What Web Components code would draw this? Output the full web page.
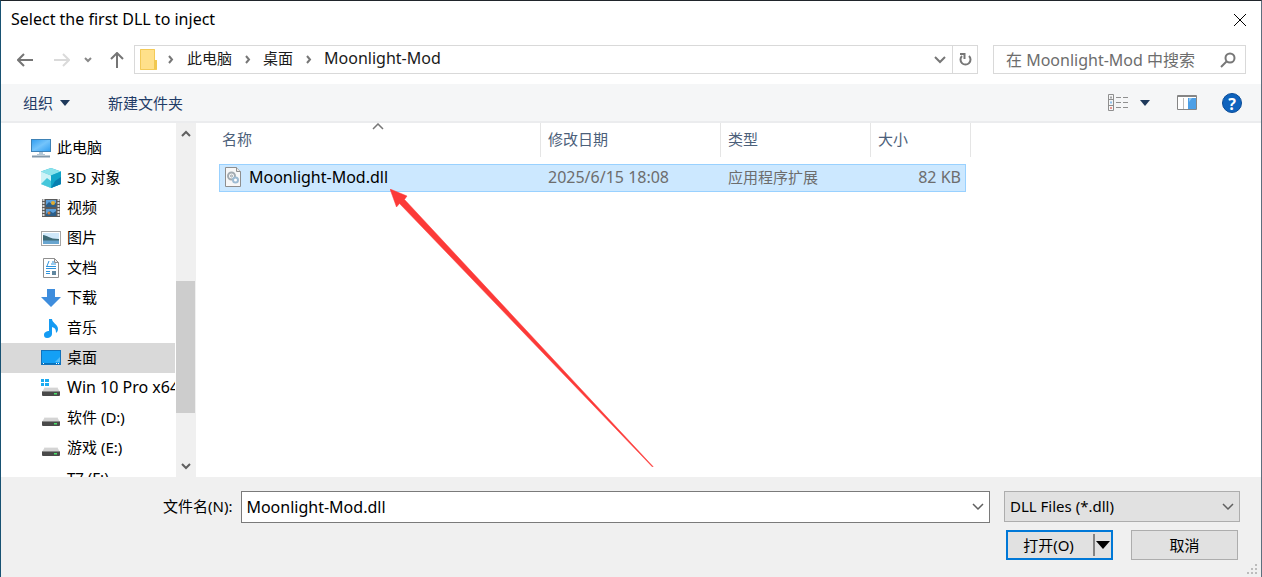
<!DOCTYPE html>
<html lang="zh-CN">
<head>
<meta charset="utf-8">
<title>Select the first DLL to inject</title>
<style>
  html, body { margin: 0; height: 100%; }
  body {
    --latin: 16px;
    --accent: #0078d7;
    --ink: #1a1a1a;
    font: 15px/20px "Noto Sans", "Noto Sans CJK SC", sans-serif;
    color: var(--ink);
    background: #fff;
  }
</style>
</head>
<body>
<file-dialog>
  <dialog-title slot="title">Select the first DLL to inject</dialog-title>
  <nav-bar slot="nav"></nav-bar>
  <command-bar slot="commands"></command-bar>
  <folder-tree slot="tree">
    <tree-item icon="pc" root>此电脑</tree-item>
    <tree-item icon="cube">3D 对象</tree-item>
    <tree-item icon="video">视频</tree-item>
    <tree-item icon="picture">图片</tree-item>
    <tree-item icon="document">文档</tree-item>
    <tree-item icon="download">下载</tree-item>
    <tree-item icon="music">音乐</tree-item>
    <tree-item icon="desktop" selected>桌面</tree-item>
    <tree-item icon="system" latin>Win 10 Pro x64</tree-item>
    <tree-item icon="drive">软件 (D:)</tree-item>
    <tree-item icon="drive">游戏 (E:)</tree-item>
    <tree-item icon="none">T7 (F:)</tree-item>
  </folder-tree>
  <file-list slot="files"></file-list>
  <dialog-footer slot="footer"></dialog-footer>
</file-dialog>

<script>
const define = (name, markup, setup) => {
  const template = document.createElement('template');
  template.innerHTML = `<style>
    *, *::before, *::after { box-sizing: border-box; }
    :host { display: block; box-sizing: border-box; }
    button, input, select { font: inherit; color: inherit; margin: 0; padding: 0; border: 0; border-radius: 0; background: none; outline: none; }
    svg { display: block; flex: none; }
  </style>` + markup;
  customElements.define(name, class extends HTMLElement {
    constructor() {
      super();
      this.attachShadow({ mode: 'open' }).append(template.content.cloneNode(true));
    }
    connectedCallback() { if (setup) setup(this, this.shadowRoot); }
  });
};

const drive = `
  <path d="M4 9h12l3 5H1z" fill="#d4d4d4"/><path d="M4 9h12l1 1H3z" fill="#efefef"/>
  <rect x="1" y="13" width="18" height="5" rx="1" fill="#4a4a4a"/>
  <path d="M1 13.500h18" stroke="#8a8a8a"/><rect x="13" y="15" width="3" height="1.500" fill="#4be36b"/>`;

const ICONS = {
  none: '',
  pc: `<defs><linearGradient id="g" x2="1" y2="1"><stop stop-color="#2f9df0"/><stop offset=".5" stop-color="#74c4fb"/><stop offset="1" stop-color="#2f9df0"/></linearGradient></defs>
    <rect x=".5" y="1.500" width="19" height="12" fill="url(#g)" stroke="#3e82b6"/>
    <path d="M8 14h4v2h2v1H6v-1h2z" fill="#b3c7d6"/><path d="M1 18.500h18" stroke="#8399aa" stroke-width="2"/>`,
  cube: `<path d="M10 0l10 3.500v12.500L10 20 0 16V3.500z" fill="#1fb1cf"/><path d="M10 0l10 3.500L10 7.500 0 3.500z" fill="#8be3ec"/>
    <path d="M0 3.500l10 4V20L0 16z" fill="#cdf3f7"/><path d="M0 16l6-6 4 3v7z" fill="#45c7db"/><path d="M10 7.500l10-4V16L10 20z" fill="#12a5c8"/><path d="M10 20l4-7 6-4v7z" fill="#087fb0"/>`,
  video: `<path d="M1 1h18v18H1z" fill="#5b5b5b"/><path d="M2.500 1v18M17.500 1v18" stroke="#d9d9d9" stroke-width="2" stroke-dasharray="2 1"/>
    <path d="M5 2h10v7H5zM5 11h10v7H5z" fill="#5c9fda"/><path d="M5 7l3-3 3 2 4-1v4H5zM5 16l4-3 3 2 3-2v5H5z" fill="#2b5e8a"/><circle cx="12" cy="5" r="2" fill="#e2ad2f"/><circle cx="8" cy="15" r="1.500" fill="#ce7b34"/>`,
  picture: `<rect x=".5" y="3.500" width="19" height="14" fill="#fff" stroke="#a6a6a6"/><path d="M2 5h16v11H2z" fill="#cfe8fa"/>
    <path d="M2 7c4 0 6 4 16 4v2H2z" fill="#3e6a76"/><path d="M2 12.500h16V16H2z" fill="#68a5cf"/>`,
  document: `<path d="M2.500.5h11l4 4v15h-15z" fill="#fff" stroke="#8f8f8f"/><path d="M13.500.5v4h4z" fill="#ececec" stroke="#8f8f8f"/>
    <path d="M8 3l-2 5M5 8.500h10M5 10.500h10M5 13.500h4M5 15.500h4M11 4h2M10 6h5" stroke="#2f93dc"/><path d="M11 13h4v4h-4z" fill="#61879f"/>`,
  download: `<path d="M6 1h8v8h6L10 19 0 9h6z" fill="#3e8ddd"/>`,
  music: `<path d="M8 1h3c0 4 6 5 6 10 0 2-1 3-2 4 0-4-1-5-4-6v7c0 2-2 4-5 4-2 0-3-1-3-3 0-3 3-4 5-4z" fill="#149bf3"/>`,
  desktop: `<rect x=".5" y="2.500" width="19" height="14" fill="#14a0f5" stroke="#1272bb"/><path d="M19 9v5h-5z" fill="#55bdf8"/><path d="M1 15.500h18" stroke="#0872b9"/><path d="M2 15.500h2m11 0h3" stroke="#fff" stroke-dasharray="1 1"/>`,
  system: drive + `<path d="M0 1h9v8H0z" fill="#fff"/><path d="M0 1h3v3H0zM4 1h4v3H4zM0 5h3v3H0zM4 5h4v3H4z" fill="#1cacf2"/>`,
  drive
};

define('file-dialog', `<style>
  :host { position: relative; display: grid; grid-template: 38px 45px 39px minmax(0, 1fr) auto / 195px minmax(0, 1fr);
    height: 100%; border: solid; border-width: 1px 1px 0 1px; border-color: #20252b #5c6f7e #20252b #185273; background: #fff; }
  slot { display: block; min-width: 0; min-height: 0; }
  slot:not([name=tree], [name=files]) { grid-column: 1 / -1; }
  slot::slotted(*) { height: 100%; }
</style>
<slot name="title"></slot><slot name="nav"></slot><slot name="commands"></slot>
<slot name="tree"></slot><slot name="files"></slot><slot name="footer"></slot>`);

define('dialog-title', `<style>
  :host { display: flex; align-items: center; justify-content: space-between; padding: 0 14px 0 10px; color: #000; }
  h1 { margin: 0; padding-bottom: 2px; font: inherit; font-size: var(--latin); }
</style>
<h1><slot></slot></h1>
<button aria-label="关闭"><svg width="14" height="14" fill="none" stroke="#000"><path d="M1 1l12 12M13 1L1 13"/></svg></button>`);

define('nav-bar', `<style>
  :host { display: flex; align-items: flex-start; padding: 6px 15px 0; }
  button { display: grid; place-items: center; height: 29px; flex: none; }
  .back { width: 18px; }
  .forward { width: 56px; }
  .recent { width: 8px; margin-left: -6px; }
  .up { width: 14px; margin-left: 18px; }
  .path, .search { display: flex; align-items: center; height: 29px; border: 1px solid #d9d9d9; }
  .path { flex: 1; min-width: 0; margin: 0 15px 0 10px; padding-left: 5px; }
  .path button { height: 27px; }
  .path .crumb { padding-bottom: 3px; }
  .latin, .search { font-size: var(--latin); }
  .sep { width: 30px; display: grid; place-items: center; padding-right: 2px; }
  .crumb + .sep { width: 31px; padding: 0; }
  .grow { flex: 1; }
  .drop { width: 24px; }
  .refresh { width: 25px; border-left: 1px solid #d9d9d9; }
  .search { width: 253px; padding: 0 9px 0 12px; }
  input { flex: 1; width: 0; height: 27px; }
  input::placeholder { color: #6d6d6d; opacity: 1; }
</style>
<button class="back" aria-label="后退"><svg width="16" height="14" fill="none" stroke="#757575" stroke-width="2"><path d="M1 7h15M7 1L1 7l6 6"/></svg></button>
<button class="forward" aria-label="前进"><svg width="16" height="14" fill="none" stroke="#dadada" stroke-width="2"><path d="M0 7h15M9 1l6 6-6 6"/></svg></button>
<button class="recent" aria-label="最近位置"><svg width="8" height="6" fill="none" stroke="#888" stroke-width="2"><path d="M1 1l3 3 3-3"/></svg></button>
<button class="up" aria-label="上移"><svg width="14" height="16" fill="none" stroke="#757575" stroke-width="2"><path d="M7 16V1M1 7l6-6 6 6"/></svg></button>
<div class="path">
  <svg width="17" height="21"><path d="M0 0h15v11h2v10H0z" fill="#ffe08a"/><path d="M.5.5h14v11l2 1v8H.5z" fill="none" stroke="#f3ca57"/><path d="M14 11h3v9h-3z" fill="#f1c84f"/></svg>
  <span class="sep"><svg width="6" height="9" fill="none" stroke="#777" stroke-width="2"><path d="M1 1l3 3.500L1 8"/></svg></span>
  <button class="crumb">此电脑</button>
  <span class="sep"><svg width="6" height="9" fill="none" stroke="#777" stroke-width="2"><path d="M1 1l3 3.500L1 8"/></svg></span>
  <button class="crumb">桌面</button>
  <span class="sep"><svg width="6" height="9" fill="none" stroke="#777" stroke-width="2"><path d="M1 1l3 3.500L1 8"/></svg></span>
  <button class="crumb latin">Moonlight-Mod</button>
  <span class="grow"></span>
  <button class="drop" aria-label="以前的位置"><svg width="12" height="8" fill="none" stroke="#777" stroke-width="2"><path d="M1 1l5 5 5-5"/></svg></button>
  <button class="refresh" aria-label="刷新"><svg width="14" height="15" fill="none" stroke="#777" stroke-width="2"><path d="M11 4a5 5 0 1 1-7 0"/><path d="M2 2h4.500v5"/></svg></button>
</div>
<div class="search"><input aria-label="搜索" placeholder="在 Moonlight-Mod 中搜索"><svg width="16" height="16" fill="none" stroke="#777" stroke-width="2"><circle cx="10" cy="6" r="4.500"/><path d="M7 9l-6 6"/></svg></div>`);

define('command-bar', `<style>
  :host { display: flex; align-items: center; padding: 0 19px 0 22px; background: #f5f6f7; border-bottom: 2px solid #ebecee; color: #1f3b66; }
  button { display: flex; align-items: center; }
  .menu { gap: 7px; margin-right: 38px; }
  .grow { flex: 1; }
  .views { gap: 11px; margin-right: 27px; }
  .pane { margin-right: 25px; }
  .help { display: grid; place-items: center; width: 20px; height: 20px; border-radius: 50%; background: #0f63bd; border: 1px solid #0a4c98; color: #fff; font-size: 16px; font-weight: 700; }
</style>
<button class="menu">组织 <svg width="10" height="6"><path d="M0 0h10L5 6z" fill="#1e395b"/></svg></button>
<button>新建文件夹</button>
<span class="grow"></span>
<button class="views" aria-label="更改视图"><svg width="21" height="17" fill="none" stroke="#8f8f8f"><path d="M.5.5h5v16h-5zM.5 5.500h5M.5 11.500h5"/><path d="M8 3.500h5m2 0h5M8 8.500h5m2 0h5M8 13.500h5m2 0h5"/><path d="M3 2.500v2" stroke="#555"/><path d="M3 7.500v2" stroke="#2a8de0"/><path d="M3 13v2" stroke="#e03c31"/></svg><svg width="10" height="6"><path d="M0 0h10L5 6z" fill="#1e395b"/></svg></button>
<button class="pane" aria-label="预览窗格"><svg width="20" height="15"><path d="M.5.5h19v14H.5z" fill="#fff" stroke="#858585"/><path d="M1 1.500h18" stroke="#858585"/><path d="M6.500 3v11" stroke="#bbb"/><path d="M11 3h8v11h-8z" fill="#4c9fe6"/><path d="M12 3h3l-3 4z" fill="#8cc6f5"/></svg></button>
<button class="help" aria-label="帮助">?</button>`);

define('tree-item', `<style>
  :host { display: flex; align-items: center; gap: 6px; height: 30px; padding: 0 0 1px 40px; white-space: nowrap; color: #000; }
  :host([root]) { padding-left: 30px; }
  :host([selected]) { background: #d9d9d9; }
  :host([latin]) { font-size: var(--latin); }
  span { padding-bottom: 2px; }
</style>
<svg width="20" height="20"></svg><span><slot></slot></span>`,
(host, root) => { root.querySelector('svg').innerHTML = ICONS[host.getAttribute('icon')]; });

define('folder-tree', `<style>
  :host { display: flex; height: 100%; }
  .items { flex: 1; min-width: 0; padding-top: 10px; overflow: hidden; margin-right: 1px; }
  .bar { display: flex; flex-direction: column; width: 20px; background: #f0f0f0; }
  button { display: grid; place-items: center; height: 22px; }
  .track { flex: 1; display: flex; flex-direction: column; }
  .track::before { content: ""; flex: 136; }
  .track::after { content: ""; flex: 42; }
  .thumb { flex: 132; width: 19px; background: #cdcdcd; }
</style>
<div class="items"><slot></slot></div>
<div class="bar">
  <button aria-label="向上滚动"><svg width="10" height="8" fill="none" stroke="#606060" stroke-width="2"><path d="M1 6l4-4 4 4"/></svg></button>
  <div class="track"><div class="thumb"></div></div>
  <button aria-label="向下滚动"><svg width="10" height="8" fill="none" stroke="#606060" stroke-width="2"><path d="M1 2l4 4 4-4"/></svg></button>
</div>`);

define('file-list', `<style>
  :host { position: relative; padding-left: 23px; overflow: hidden; }
  table { table-layout: fixed; width: 752px; border-spacing: 0; }
  th { position: relative; height: 34px; padding: 0 0 2px 7px; font-weight: 400; text-align: left; color: #4c607a; border-right: 1px solid #e5e5e5; }
  th:first-child { padding-left: 3px; }
  th svg { position: absolute; left: 50%; top: 0; margin-left: -8px; }
  tbody::before { content: ""; display: block; height: 7px; }
  td { height: 28px; padding: 0 0 3px 7px; color: #6d6d6d; font-size: var(--latin); background: #cce8ff padding-box; box-shadow: inset 0 1px #99d1ff, inset 0 -1px #99d1ff; }
  td:first-child { padding-left: 5px; color: #000; box-shadow: inset 1px 1px #99d1ff, inset 0 -1px #99d1ff; }
  td:last-child { padding: 0 5px 3px 0; text-align: right; border-right: 5px solid transparent; box-shadow: inset -1px -1px #99d1ff, inset 0 1px #99d1ff; }
  td.kind { font-size: 15px; }
  .name { display: flex; align-items: center; gap: 7px; height: 20px; }
  .pointer { position: absolute; left: 194px; top: 66px; }
</style>
<table>
  <colgroup><col style="width:322px"><col style="width:180px"><col style="width:150px"><col style="width:100px"></colgroup>
  <thead><tr><th>名称<svg width="12" height="7" fill="none" stroke="#777" stroke-width="1.500"><path d="M1 6l5-5 5 5"/></svg></th><th>修改日期</th><th>类型</th><th>大小</th></tr></thead>
  <tbody><tr>
    <td><span class="name"><svg width="18" height="20" fill="none" stroke="#8e8e8e"><path d="M1.500.5h11l4 4v15h-15z" fill="#f7f7f7"/><path d="M12.500.5v4h4" fill="#e8e8e8"/><circle cx="7.500" cy="9" r="3.500" stroke="#a3abb1" stroke-width="2"/><circle cx="7.500" cy="9" r="1" stroke="#9aa2a8"/><circle cx="11.500" cy="13" r="2.500" fill="#fff" stroke="#9dbbd3" stroke-width="2"/></svg>Moonlight-Mod.dll</span></td>
    <td>2025/6/15 18:08</td><td class="kind">应用程序扩展</td><td>82 KB</td>
  </tr></tbody>
</table>
<svg class="pointer" width="264" height="279"><path d="M0 0l17 7-2.500 3.500L263 277.500l-.5.5L9.500 14.500 6.500 18z" fill="#fc3a38" stroke="#fc3a38" stroke-width=".5"/></svg>`);

define('dialog-footer', `<style>
  :host { position: relative; display: grid; grid-template-columns: minmax(0, 1fr) 236px; gap: 7px 14px; padding: 14px 21px 17px 162px; background: #f0f0f0; color: #000; }
  .row { display: flex; align-items: center; gap: 9px; }
  label { padding-bottom: 2px; }
  .combo { flex: 1; display: flex; align-items: center; height: 32px; background: #fff; border: 1px solid #7a7a7a; padding-right: 4px; }
  input { flex: 1; width: 0; height: 30px; padding-left: 4px; font-size: var(--latin); }
  .combo button { display: grid; place-items: center; width: 14px; height: 30px; }
  .type { position: relative; }
  .type svg { position: absolute; right: 6px; top: 12px; pointer-events: none; }
  select { appearance: none; width: 100%; height: 31px; padding: 0 24px 2px 5px; background: #e1e1e1; border: 1px solid #adadad; }
  .actions { grid-column: 2; display: flex; justify-content: space-between; padding: 0 2px; }
  .split, .cancel { display: flex; width: 107px; height: 30px; background: #e1e1e1; }
  .split { border: 2px solid var(--accent); }
  .split button:first-child { flex: 1; padding-right: 4px; }
  .split .more { display: grid; place-items: center; width: 18px; height: 22px; margin-top: 2px; border-left: 2px solid #838383; }
  .cancel { justify-content: center; align-items: center; border: 1px solid #adadad; }
  .grip { position: absolute; right: 3px; bottom: 2px; }
</style>
<div class="row"><label for="name">文件名(N):</label>
  <div class="combo"><input id="name" value="Moonlight-Mod.dll"><button aria-label="显示列表"><svg width="12" height="8" fill="none" stroke="#606060" stroke-width="1.500"><path d="M1 1l5 5 5-5"/></svg></button></div>
</div>
<div class="type"><select aria-label="文件类型"><option>DLL Files (*.dll)</option></select><svg width="12" height="8" fill="none" stroke="#606060" stroke-width="1.500"><path d="M1 1l5 5 5-5"/></svg></div>
<div class="actions">
  <div class="split"><button>打开(O)</button><button class="more" aria-label="打开选项"><svg width="14" height="8"><path d="M0 0h14L7 8z"/></svg></button></div>
  <button class="cancel">取消</button>
</div>
<svg class="grip" width="11" height="11" fill="#bcbcbc"><path d="M8 0h2v2H8zM4 4h2v2H4zM8 4h2v2H8zM0 8h2v2H0zM4 8h2v2H4zM8 8h2v2H8z"/></svg>`);
</script>
</body>
</html>
